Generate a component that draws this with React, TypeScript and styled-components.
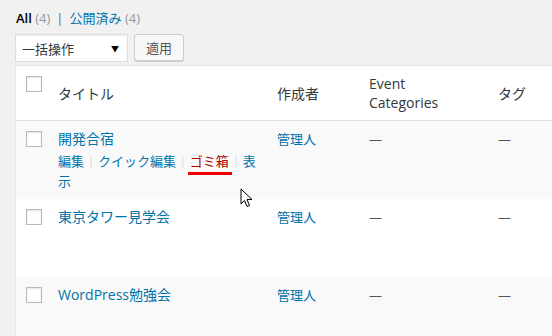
import React from "react";
import styled, { createGlobalStyle } from "styled-components";

const Global = createGlobalStyle`
  html, body { margin: 0; padding: 0; background: #f1f1f1; overflow: hidden; }
  body {
    font-family: "Open Sans", "Noto Sans CJK JP", sans-serif;
    font-size: 13px;
    color: #444;
    width: 552px;
    height: 336px;
  }
`;

const Page = styled.div`
  position: relative;
  padding: 8px 0 0 15px;
  height: 336px;
  box-sizing: border-box;
  overflow: hidden;
`;

const SubNav = styled.div`
  height: 20px;
  line-height: 20px;
  padding-left: 1px;
  font-size: 13px;
  color: #666;
  white-space: nowrap;
`;

const Current = styled.span`
  color: #000;
  font-weight: 600;
`;

const NavLink = styled.span`
  color: #0073aa;
`;

const Count = styled.span`
  color: #999;
`;

const Sep = styled.span`
  color: #666;
  margin: 0 6px;
`;

const Bulk = styled.div`
  display: flex;
  gap: 6px;
  margin-top: 6px;
`;

const Select = styled.div`
  box-sizing: border-box;
  width: 113px;
  height: 28px;
  background: #fff;
  border: 1px solid #ddd;
  box-shadow: inset 0 1px 2px rgba(0, 0, 0, 0.07);
  display: flex;
  align-items: center;
  justify-content: space-between;
  padding: 0 8px 0 6px;
  font-size: 13px;
  color: #32373c;
`;

const Arrow = styled.span`
  font-size: 8px;
  color: #000;
`;

const Button = styled.div`
  box-sizing: border-box;
  height: 27px;
  padding: 0 11px;
  display: flex;
  align-items: center;
  background: #f7f7f7;
  border: 1px solid #ccc;
  border-radius: 3px;
  box-shadow: 0 1px 0 #ccc;
  font-size: 13px;
  color: #555;
`;

const Table = styled.div`
  margin-top: 3px;
  width: 560px;
  background: #fff;
  border: 1px solid #e5e5e5;
  box-shadow: 0 1px 1px rgba(0, 0, 0, 0.04);
`;

const Row = styled.div<{ $striped?: boolean; $head?: boolean }>`
  display: grid;
  grid-template-columns: 32px 219px 92px 129px 1fr;
  background: ${(p) => (p.$striped ? "#f9f9f9" : "#fff")};
  border-bottom: ${(p) => (p.$head ? "1px solid #e1e1e1" : "none")};
`;

const CheckCell = styled.div`
  padding: 10px 0 0 10px;
`;

const Box = styled.div`
  box-sizing: border-box;
  width: 16px;
  height: 16px;
  border: 1px solid #b4b9be;
  background: #fff;
  box-shadow: inset 0 1px 2px rgba(0, 0, 0, 0.1);
`;

const HeadCell = styled.div`
  padding: 8px 10px;
  font-size: 14px;
  line-height: 19px;
  color: #32373c;
  display: flex;
  align-items: center;
`;

const HeadLabel = styled.span`
  max-width: 90px;
`;

const Cell = styled.div`
  padding: 8px 10px;
  line-height: 20px;
  font-size: 13px;
  color: #555;
`;

const TitleLink = styled.div`
  color: #0073aa;
  font-size: 14px;
`;

const RowActions = styled.div<{ $hidden?: boolean }>`
  margin-top: 2px;
  color: #0073aa;
  visibility: ${(p) => (p.$hidden ? "hidden" : "visible")};
`;

const ActSep = styled.span`
  color: #ddd;
`;

const Trash = styled.span`
  position: relative;
  color: #a00;
  &::after {
    content: "";
    position: absolute;
    left: -2px;
    right: -3px;
    bottom: -5px;
    height: 3px;
    background: #e00;
  }
`;

const Author = styled.span`
  color: #0073aa;
  font-weight: 400;
`;

const Dash = styled.span`
  color: #555;
`;

const Cursor = styled.svg`
  position: absolute;
  left: 240px;
  top: 188px;
`;

type Post = { title: string; striped: boolean; actions: boolean };

const posts: Post[] = [
  { title: "開発合宿", striped: true, actions: true },
  { title: "東京タワー見学会", striped: false, actions: false },
  { title: "WordPress勉強会", striped: true, actions: false },
];

export default function App() {
  return (
    <>
      <Global />
      <Page>
        <SubNav>
          <Current>All</Current> <Count>(4)</Count>
          <Sep>|</Sep>
          <NavLink>公開済み</NavLink> <Count>(4)</Count>
        </SubNav>
        <Bulk>
          <Select>
            <span>一括操作</span>
            <Arrow>▼</Arrow>
          </Select>
          <Button>適用</Button>
        </Bulk>
        <Table>
          <Row $head>
            <CheckCell>
              <Box />
            </CheckCell>
            <HeadCell>タイトル</HeadCell>
            <HeadCell>作成者</HeadCell>
            <HeadCell>
              <HeadLabel>Event Categories</HeadLabel>
            </HeadCell>
            <HeadCell>タグ</HeadCell>
          </Row>
          {posts.map((p) => (
            <Row key={p.title} $striped={p.striped}>
              <CheckCell>
                <Box />
              </CheckCell>
              <Cell>
                <TitleLink>{p.title}</TitleLink>
                <RowActions $hidden={!p.actions}>
                  編集 <ActSep>|</ActSep> クイック編集 <ActSep>|</ActSep>{" "}
                  <Trash>ゴミ箱</Trash> <ActSep>|</ActSep> 表示
                </RowActions>
              </Cell>
              <Cell>
                <Author>管理人</Author>
              </Cell>
              <Cell>
                <Dash>—</Dash>
              </Cell>
              <Cell>
                <Dash>—</Dash>
              </Cell>
            </Row>
          ))}
        </Table>
        <Cursor width="13" height="20" viewBox="0 0 13 20">
          <path
            d="M1 1 L1 16 L4.5 12.5 L7 18.5 L9.5 17.5 L7 11.5 L12 11.5 Z"
            fill="#fff"
            stroke="#000"
            strokeWidth="1"
            strokeLinejoin="miter"
          />
        </Cursor>
      </Page>
    </>
  );
}
